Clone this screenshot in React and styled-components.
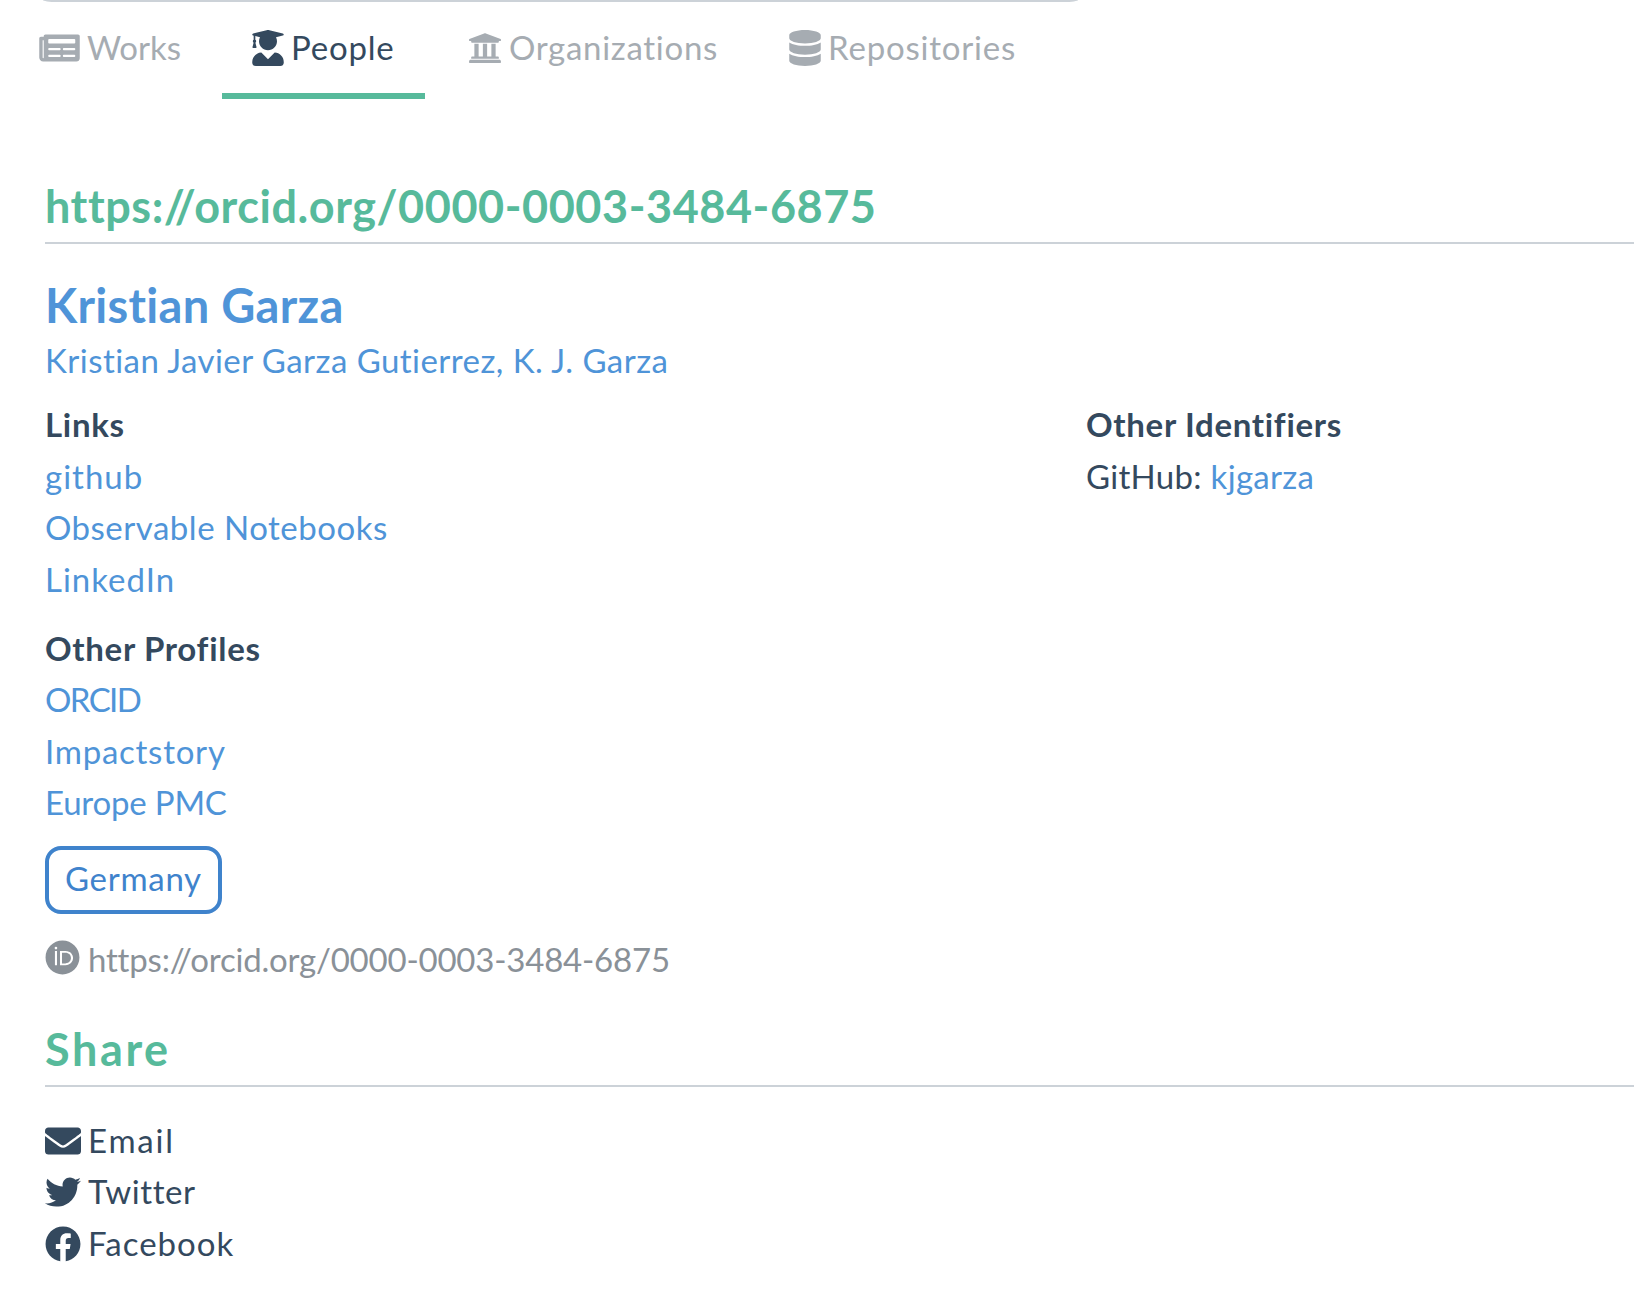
import React from "react";
import styled, { createGlobalStyle } from "styled-components";
import {
  FaNewspaper,
  FaUserGraduate,
  FaUniversity,
  FaDatabase,
  FaEnvelope,
  FaTwitter,
  FaFacebook,
  FaOrcid,
} from "react-icons/fa";

const GlobalStyle = createGlobalStyle`
  html, body {
    margin: 0;
    background: #fff;
    overflow: hidden;
  }
  body {
    font-family: Lato, "Noto Sans", sans-serif;
    font-size: 33px;
    line-height: 51.4px;
    letter-spacing: 0.3px;
    font-variant-ligatures: none;
    color: #34495e;
  }
`;

const Page = styled.div`
  width: 1634px;
  height: 1300px;
  overflow: hidden;
`;

const TopEdge = styled.div`
  width: 1035px;
  height: 2px;
  margin: 0 0 1px 43px;
  background: #ccd2d8;
  border-radius: 0 0 14px 14px / 0 0 2px 2px;
`;

const Tabs = styled.nav`
  display: flex;
  height: 96px;
`;

const Tab = styled.a`
  display: flex;
  align-items: center;
  gap: 7px;
  width: ${(p) => p.$width}px;
  padding-left: ${(p) => p.$inset}px;
  box-sizing: border-box;
  height: 96px;
  letter-spacing: ${(p) => p.$spacing}px;
  color: ${(p) => (p.$active ? "#34495e" : "#a6acb2")};
  border-bottom: 6px solid ${(p) => (p.$active ? "#57ba9b" : "transparent")};
  svg {
    width: ${(p) => p.$icon}px;
    height: 36px;
    flex: none;
  }
`;

const Content = styled.main`
  padding-left: 45px;
`;

const SectionTitle = styled.h3`
  margin: ${(p) => p.$top}px 0 0;
  height: 67px;
  font-size: 45px;
  line-height: 63px;
  font-weight: 700;
  letter-spacing: ${(p) => p.$spacing}px;
  color: #57ba9b;
  border-bottom: 2px solid #ccd2d8;
`;

const Name = styled.h2`
  margin: 31px 0 0;
  font-size: 47px;
  line-height: 60px;
  font-weight: 700;
  color: #4f94d8;
`;

const AltNames = styled.div`
  letter-spacing: 0.45px;
  color: #4f94d8;
`;

const Columns = styled.div`
  display: grid;
  grid-template-columns: 1041px 1fr;
  margin-top: 13px;
`;

const Label = styled.div`
  font-weight: 700;
  letter-spacing: 0.7px;
  margin-top: ${(p) => p.$top || 0}px;
`;

const Link = styled.a`
  display: block;
  letter-spacing: ${(p) => p.$spacing ?? 0.5}px;
  color: #4f94d8;
  text-decoration: none;
`;

const Inline = styled(Link)`
  display: inline;
`;

const Tag = styled.a`
  display: block;
  width: fit-content;
  box-sizing: border-box;
  height: 68px;
  margin-top: 17px;
  padding: 0 16px;
  line-height: 57px;
  letter-spacing: 0.7px;
  color: #3f83cc;
  border: 4px solid #3f83cc;
  border-radius: 16px;
`;

const OrcidRow = styled.div`
  display: flex;
  align-items: center;
  gap: 8px;
  margin-top: 20px;
  letter-spacing: -0.2px;
  color: #8a9198;
  svg {
    width: 35px;
    height: 35px;
    margin-top: -3px;
    flex: none;
  }
`;

const ShareList = styled.div`
  margin-top: 28px;
`;

const ShareItem = styled.a`
  display: flex;
  align-items: center;
  gap: 7px;
  letter-spacing: ${(p) => p.$spacing ?? 0.6}px;
  color: #34495e;
  svg {
    width: 36px;
    height: 36px;
    flex: none;
  }
`;

const App = () => {
  return (
    <Page>
      <GlobalStyle />
      <TopEdge />
      <Tabs>
        <Tab $width={222} $inset={39} $icon={41} $spacing={0}>
          <FaNewspaper />
          Works
        </Tab>
        <Tab $width={203} $inset={30} $icon={32} $spacing={0.8} $active>
          <FaUserGraduate />
          People
        </Tab>
        <Tab $width={324} $inset={43} $icon={34} $spacing={0.7}>
          <FaUniversity />
          Organizations
        </Tab>
        <Tab $width={300} $inset={40} $icon={32} $spacing={0.8}>
          <FaDatabase />
          Repositories
        </Tab>
      </Tabs>
      <Content>
        <SectionTitle $top={76} $spacing={0.55}>
          https://orcid.org/0000-0003-3484-6875
        </SectionTitle>
        <Name>Kristian Garza</Name>
        <AltNames>Kristian Javier Garza Gutierrez, K. J. Garza</AltNames>
        <Columns>
          <div>
            <Label>Links</Label>
            <Link $spacing={1}>github</Link>
            <Link>Observable Notebooks</Link>
            <Link $spacing={1}>LinkedIn</Link>
            <Label $top={18}>Other Profiles</Label>
            <Link $spacing={-1.6}>ORCID</Link>
            <Link $spacing={0.75}>Impactstory</Link>
            <Link $spacing={-0.2}>Europe PMC</Link>
          </div>
          <div>
            <Label>Other Identifiers</Label>
            <div>
              GitHub: <Inline $spacing={0.3}>kjgarza</Inline>
            </div>
          </div>
        </Columns>
        <Tag>Germany</Tag>
        <OrcidRow>
          <FaOrcid />
          https://orcid.org/0000-0003-3484-6875
        </OrcidRow>
        <SectionTitle $top={33} $spacing={2.6}>
          Share
        </SectionTitle>
        <ShareList>
          <ShareItem $spacing={1.8}>
            <FaEnvelope />
            Email
          </ShareItem>
          <ShareItem>
            <FaTwitter />
            Twitter
          </ShareItem>
          <ShareItem $spacing={1}>
            <FaFacebook />
            Facebook
          </ShareItem>
        </ShareList>
      </Content>
    </Page>
  );
};

export default App;
